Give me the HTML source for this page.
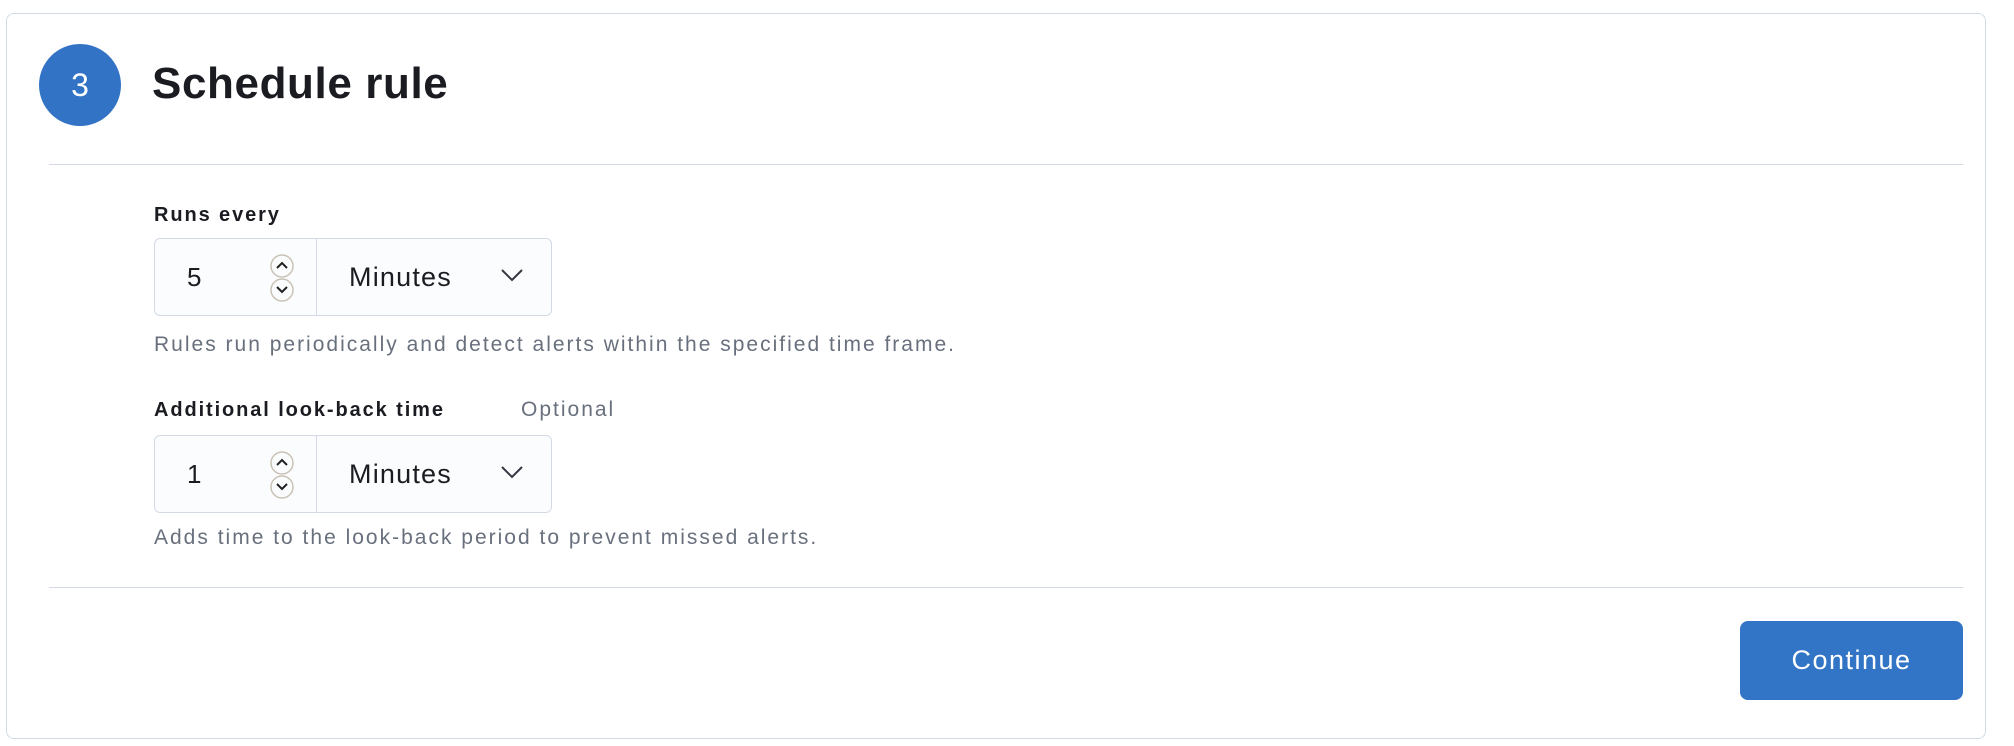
<!DOCTYPE html>
<html><head><style>
html,body{margin:0;padding:0;width:2014px;height:746px;background:#fff;overflow:hidden;font-family:"Liberation Sans",sans-serif;color:#1a1c21}
.card{position:absolute;left:6px;top:13px;width:1980px;height:726px;border:1px solid #d3dae6;border-radius:8px;box-sizing:border-box}
.abs{position:absolute}
.circle{left:39px;top:44px;width:82px;height:82px;border-radius:50%;background:#3273c5;color:#fff;font-size:32px;line-height:82px;text-align:center}
.title{left:152px;top:58px;font-size:44px;font-weight:bold;line-height:52px;letter-spacing:0.6px}
.hr{height:1px;background:#d3dae6;left:49px;width:1914px}
.label{font-size:20px;font-weight:bold;line-height:24px;letter-spacing:1.9px}
.help{font-size:21px;color:#69707d;line-height:24px;letter-spacing:2px}
.grp{width:398px;height:78px;border:1px solid #d3dae6;border-radius:6px;box-sizing:border-box;background:#fbfcfd;overflow:hidden}
.num{position:absolute;left:0;top:0;width:162px;height:76px;border-right:1px solid #d3dae6;box-sizing:border-box;font-size:26px;line-height:76px;padding-left:32px}
.sel{position:absolute;left:162px;top:0;font-size:27px;line-height:76px;padding-left:32px;letter-spacing:1.2px}
.spin{position:absolute;left:112px;top:14px}
.chev{position:absolute;left:345px;top:28px}
.btn{left:1740px;top:621px;width:223px;height:79px;background:#3274c6;border-radius:8px;color:#fff;font-size:27px;line-height:79px;text-align:center;letter-spacing:1.5px}
</style></head><body>
<div class="card"></div>
<div class="abs circle">3</div>
<div class="abs title">Schedule rule</div>
<div class="abs hr" style="top:164px"></div>

<div class="abs label" style="left:154px;top:203px">Runs every</div>
<div class="abs grp" style="left:154px;top:238px">
 <div class="num">5</div>
 <svg class="spin" width="30" height="50" viewBox="0 0 30 50"><rect x="4" y="2" width="22" height="22" rx="11" fill="none" stroke="#c9c2b6" stroke-width="1.5"/><rect x="4" y="26" width="22" height="22" rx="11" fill="none" stroke="#c9c2b6" stroke-width="1.5"/><path d="M10 15 L15 10 L20 15" fill="none" stroke="#222" stroke-width="2"/><path d="M10 34 L15 39 L20 34" fill="none" stroke="#222" stroke-width="2"/></svg>
 <div class="sel">Minutes</div>
 <svg class="chev" width="24" height="16" viewBox="0 0 24 16"><path d="M2 3 L12 13 L22 3" fill="none" stroke="#343741" stroke-width="2"/></svg>
</div>
<div class="abs help" style="left:154px;top:333px">Rules run periodically and detect alerts within the specified time frame.</div>

<div class="abs label" style="left:154px;top:398px">Additional look-back time</div>
<div class="abs help" style="left:521px;top:398px">Optional</div>
<div class="abs grp" style="left:154px;top:435px">
 <div class="num">1</div>
 <svg class="spin" width="30" height="50" viewBox="0 0 30 50"><rect x="4" y="2" width="22" height="22" rx="11" fill="none" stroke="#c9c2b6" stroke-width="1.5"/><rect x="4" y="26" width="22" height="22" rx="11" fill="none" stroke="#c9c2b6" stroke-width="1.5"/><path d="M10 15 L15 10 L20 15" fill="none" stroke="#222" stroke-width="2"/><path d="M10 34 L15 39 L20 34" fill="none" stroke="#222" stroke-width="2"/></svg>
 <div class="sel">Minutes</div>
 <svg class="chev" width="24" height="16" viewBox="0 0 24 16"><path d="M2 3 L12 13 L22 3" fill="none" stroke="#343741" stroke-width="2"/></svg>
</div>
<div class="abs help" style="left:154px;top:526px">Adds time to the look-back period to prevent missed alerts.</div>

<div class="abs hr" style="top:587px"></div>
<div class="abs btn">Continue</div>
</body></html>
